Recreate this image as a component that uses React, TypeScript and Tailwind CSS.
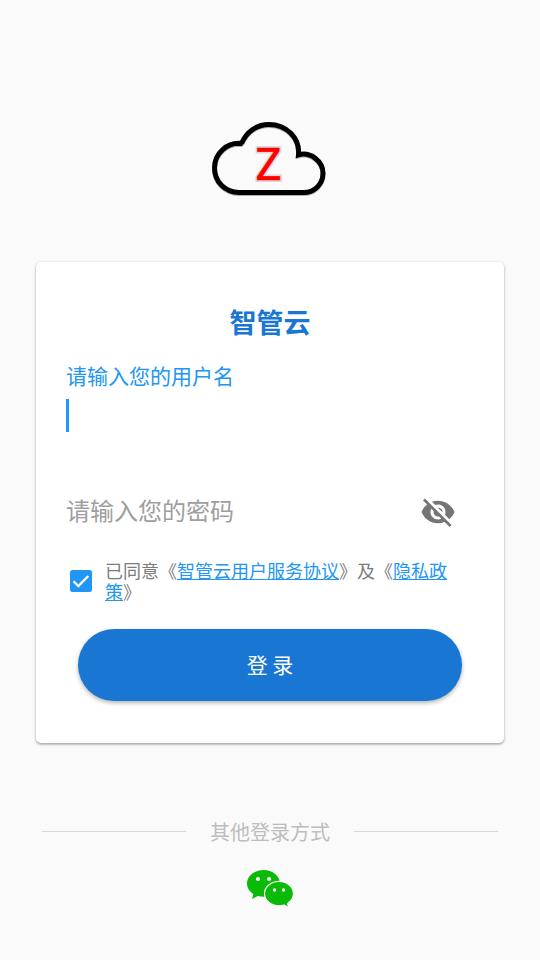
function CloudLogo() {
  return (
    <svg width="120" height="84" viewBox="0 0 120 84" className="block" role="img" aria-label="Z">
      <defs>
        <filter id="lift" x="-10%" y="-10%" width="120%" height="125%">
          <feDropShadow dx="0" dy="1" stdDeviation="0.5" floodColor="#000" floodOpacity="0.3" />
        </filter>
      </defs>
      <path
        d="M32.5 27.6C17 25.5 4.5 37.5 4.5 52C4.5 65.5 15 76.5 29 76.5H93.5C104.5 76.5 113 68 113 57.3C113 45 100.5 35.5 88.5 38.8C90 22 76.5 8.5 59 8.5C47 8.5 36.5 15.5 31.5 27.6Z"
        fill="none"
        stroke="#000"
        strokeWidth="5"
        filter="url(#lift)"
      />
      <text x="58.5" y="64" textAnchor="middle" fontSize="43.5" fill="#dadada" stroke="#dadada" strokeWidth="4" className="font-['Roboto',sans-serif]">
        Z
      </text>
      <text x="58.5" y="63.5" textAnchor="middle" fontSize="43.5" fill="#ff0000" stroke="#ff0000" strokeWidth="0.7" className="font-['Roboto',sans-serif]">
        Z
      </text>
    </svg>
  );
}

function EyeOff() {
  return (
    <svg width="36" height="36" viewBox="0 0 24 24" fill="#757575">
      <path d="M12 7c2.76 0 5 2.24 5 5 0 .65-.13 1.26-.36 1.83l2.92 2.92c1.51-1.26 2.7-2.89 3.43-4.75-1.73-4.39-6-7.5-11-7.5-1.4 0-2.74.25-3.98.7l2.16 2.16C10.74 7.13 11.35 7 12 7zM2 4.27l2.28 2.28.46.46C3.08 8.3 1.78 10.02 1 12c1.73 4.39 6 7.5 11 7.5 1.55 0 3.03-.3 4.38-.84l.42.42L19.73 22 21 20.73 3.27 3 2 4.27zM7.53 9.8l1.55 1.55c-.05.21-.08.43-.08.65 0 1.66 1.34 3 3 3 .22 0 .44-.03.65-.08l1.55 1.55c-.67.33-1.41.53-2.2.53-2.76 0-5-2.24-5-5 0-.79.2-1.53.53-2.2zm4.31-.78l3.15 3.15.02-.16c0-1.66-1.34-3-3-3l-.17.01z" />
    </svg>
  );
}

function WeChat() {
  return (
    <svg width="48" height="40" viewBox="0 0 48 40" className="block">
      <path d="M17.5 2C8.4 2 1 8 1 15.5C1 19.8 3.5 23.5 7.4 26L6 31L11.7 28C13.5 28.5 15.5 28.8 17.5 28.8C26.6 28.8 34 23 34 15.5S26.6 2 17.5 2Z" fill="#09bb07" />
      <path d="M33 13.4C25 13.4 18.5 18.8 18.5 25.6S25 37.8 33 37.8C34.7 37.8 36.4 37.5 38 37L42.8 39.8L41.6 35.4C45.2 33 47.5 29.6 47.5 25.6C47.5 18.8 41 13.4 33 13.4Z" fill="#09bb07" stroke="#fafafa" strokeWidth="1.2" />
      <g fill="#fafafa">
        <circle cx="12" cy="11" r="2.1" />
        <circle cx="23" cy="11" r="2.1" />
        <circle cx="28.5" cy="22" r="1.7" />
        <circle cx="37.5" cy="22" r="1.7" />
      </g>
    </svg>
  );
}

const link = "text-[#2196f3] underline decoration-1 underline-offset-1";

export default function App() {
  return (
    <div className="flex h-[960px] w-[540px] flex-col items-center overflow-hidden bg-[#fafafa] pt-[116px] font-['Noto_Sans_CJK_SC',sans-serif]">
      <CloudLogo />
      <main className="mt-[62px] flex h-[481px] w-[468px] flex-col rounded-[5px] bg-white px-[30px] pt-[40px] shadow-[0_1px_3px_rgba(0,0,0,0.3),0_2px_2px_rgba(0,0,0,0.1)]">
        <h1 className="text-center text-[27px] leading-10 font-bold text-[#1976d2]">智管云</h1>
        <label className="mt-[17px] block text-[21px] leading-[32px] text-[#2196f3]">请输入您的用户名</label>
        <div className="mt-[8px] h-[33px] w-[3px] bg-[#2196f3]" />
        <div className="mt-[62px] flex h-9 items-start justify-between pr-[18px]">
          <span className="-mt-[2px] text-[24px] leading-9 text-[#9e9e9e]">请输入您的密码</span>
          <EyeOff />
        </div>
        <div className="mt-[30px] flex items-center pl-1">
          <span className="flex size-[22px] shrink-0 items-center justify-center rounded-[2.5px] bg-[#2196f3]">
            <svg width="22" height="22" viewBox="0 0 22 22" fill="none" stroke="#fff" strokeWidth="2.3">
              <path d="M3.5 11.2L8.3 16L18.3 6" />
            </svg>
          </span>
          <p className="ml-[13px] w-[350px] text-[18px] leading-[21px] break-all text-[#7c7c7c]">
            已同意《<a className={link}>智管云用户服务协议</a>》及《<a className={link}>隐私政<br />策</a>》
          </p>
        </div>
        <button className="mx-3 mt-[27px] h-[72px] shrink-0 rounded-full bg-[#1976d2] text-[21px] text-white shadow-[0_2px_4px_rgba(0,0,0,0.3)]">
          登 录
        </button>
      </main>
      <div className="mt-[73px] flex h-[30px] w-[456px] items-center gap-6 text-[20px] text-[#bdbdbd]">
        <div className="h-px flex-1 bg-[#d8d8d8]" />
        <span className="pt-[2px] leading-[30px]">其他登录方式</span>
        <div className="h-px flex-1 bg-[#d8d8d8]" />
      </div>
      <div className="mt-[22px]">
        <WeChat />
      </div>
    </div>
  );
}
